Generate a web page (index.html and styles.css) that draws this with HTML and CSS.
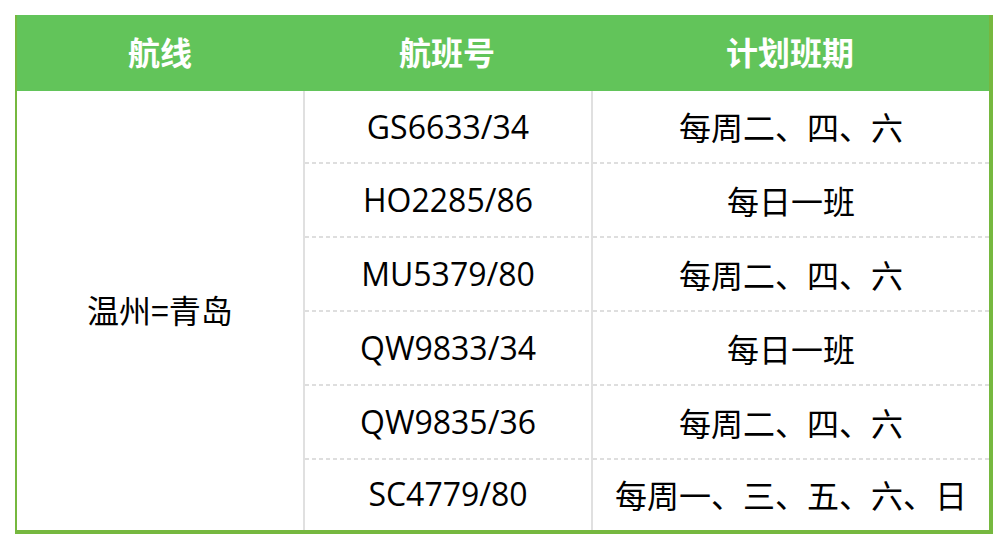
FILE: index.html
```html
<!DOCTYPE html>
<html lang="zh-CN">
<head>
<meta charset="utf-8">
<title>航线计划</title>
<link rel="stylesheet" href="styles.css">
</head>
<body>
<div class="sched">
  <div class="head">航线</div>
  <div class="head">航班号</div>
  <div class="head">计划班期</div>
  <div class="route">温州=青岛</div>
  <div class="cell flight">GS6633/34</div><div class="cell days">每周二、四、六</div>
  <div class="cell flight">HO2285/86</div><div class="cell days">每日一班</div>
  <div class="cell flight">MU5379/80</div><div class="cell days">每周二、四、六</div>
  <div class="cell flight">QW9833/34</div><div class="cell days">每日一班</div>
  <div class="cell flight">QW9835/36</div><div class="cell days">每周二、四、六</div>
  <div class="cell flight last">SC4779/80</div><div class="cell days last">每周一、三、五、六、日</div>
</div>
</body>
</html>
```
FILE: styles.css
```css
html, body {
  margin: 0;
  padding: 0;
  background: #fff;
}
body {
  padding: 15px;
  font-family: "Open Sans", "Noto Sans CJK SC", sans-serif;
  color: #000;
}
.sched {
  display: grid;
  grid-template-columns: 286px 288px 398px;
  grid-template-rows: 76px 73px 74px 74px 74px 74px 70px;
  border-left: 2px solid #76b83f;
  border-right: 4px solid #76b83f;
  border-bottom: 4px solid #76b83f;
  width: 972px;
}
.head {
  background: #62c45a;
  color: #fff;
  font-weight: 700;
  font-size: 32px;
  display: flex;
  align-items: center;
  justify-content: center;
  padding-bottom: 4px;
  font-family: "Noto Sans CJK SC", sans-serif;
}
.route {
  grid-column: 1;
  grid-row: 2 / span 6;
  display: flex;
  align-items: center;
  justify-content: center;
  padding-bottom: 4px;
  font-size: 32px;
  font-family: "Noto Sans CJK SC", sans-serif;
}
.cell {
  display: flex;
  align-items: center;
  justify-content: center;
  padding-bottom: 3px;
  font-size: 32px;
  border-left: 2px solid #e0e0e0;
  background-image: repeating-linear-gradient(to right, #dedede 0 4px, transparent 4px 7px);
  background-size: 100% 2px;
  background-position: left bottom;
  background-repeat: no-repeat;
}
.days {
  font-family: "Noto Sans CJK SC", sans-serif;
}
.cell.last {
  background-image: none;
}
```
